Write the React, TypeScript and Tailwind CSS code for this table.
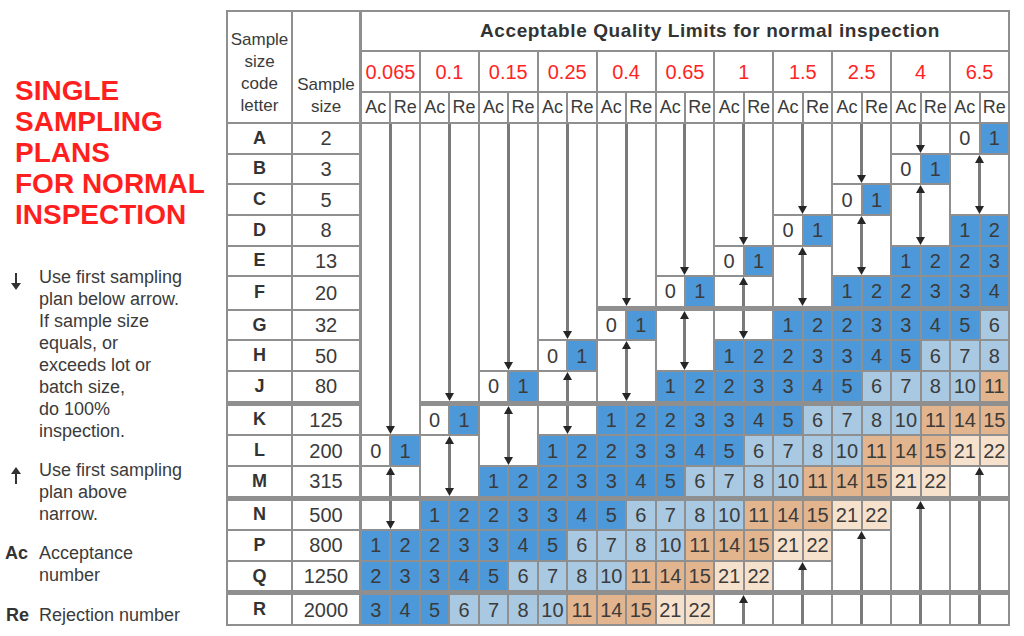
import type { ReactNode } from "react"

type Kind = "down" | "up" | "both" | "line"

type ValueCell = { col: number; row: number; value: number }
type ArrowCell = { col: number; from: number; to: number; kind: Kind }

const AQLS = ["0.065", "0.1", "0.15", "0.25", "0.4", "0.65", "1", "1.5", "2.5", "4", "6.5"]

const LOTS: [string, number][] = [
  ["A", 2], ["B", 3], ["C", 5], ["D", 8], ["E", 13], ["F", 20], ["G", 32], ["H", 50],
  ["J", 80], ["K", 125], ["L", 200], ["M", 315], ["N", 500], ["P", 800], ["Q", 1250], ["R", 2000],
]

const PLANS: [number, number][] = [
  [0, 1], [1, 2], [2, 3], [3, 4], [5, 6], [7, 8], [10, 11], [14, 15], [21, 22],
]

// data rows that sit under a heavy rule (G, K, N, R)
const BREAKS = [6, 9, 12, 15]

// grid line where data row r starts: 3 header rows, plus one 1px rule row per break above it
const gridLine = (r: number) => r + 4 + BREAKS.filter((b) => r >= b).length

function shade(v: number) {
  if (v === 0) return "bg-white"
  if (v <= 5) return "bg-[#4d98d8]"
  if (v <= 10) return "bg-[#a9c8e2]"
  if (v <= 15) return "bg-[#e3b58e]"
  return "bg-[#f6e1cd]"
}

function buildCells() {
  const values: ValueCell[] = []
  const arrows: ArrowCell[] = []

  AQLS.forEach((_, c) => {
    const col = 3 + c * 2
    const first = 10 - c
    const plan = (k: number, row: number) => {
      values.push({ col, row, value: PLANS[k][0] }, { col: col + 1, row, value: PLANS[k][1] })
    }

    if (first > 0) arrows.push({ col, from: 0, to: first - 1, kind: "down" })
    plan(0, first)

    if (BREAKS.includes(first + 2)) {
      arrows.push({ col, from: first + 1, to: first + 1, kind: "up" })
      arrows.push({ col, from: first + 2, to: first + 2, kind: "down" })
    } else {
      arrows.push({ col, from: first + 1, to: first + 2, kind: "both" })
    }

    for (let k = 1; k < PLANS.length; k++) {
      const row = first + 2 + k
      if (row <= 15) plan(k, row)
    }

    let start = first + 11
    let head = true
    while (start <= 15) {
      let end = start
      while (end < 15 && !BREAKS.includes(end + 1)) end++
      arrows.push({ col, from: start, to: end, kind: head ? "up" : "line" })
      head = false
      start = end + 1
    }
  })

  return { values, arrows }
}

function Head({ up }: { up?: boolean }) {
  return (
    <svg width="9" height="8" viewBox="0 0 9 8" className="block shrink-0 fill-[#262626]">
      <path d={up ? "M0 8H9L4.5 0Z" : "M0 0H9L4.5 8Z"} />
    </svg>
  )
}

function Arrow({ kind }: { kind: Kind }) {
  return (
    <div className="flex h-full flex-col items-center bg-white">
      {(kind === "up" || kind === "both") && <Head up />}
      <div className="w-[3px] flex-1 bg-[#7a7a7a]" />
      {(kind === "down" || kind === "both") && <Head />}
    </div>
  )
}

function SamplingTable() {
  const { values, arrows } = buildCells()

  return (
    <div className="grid h-[616px] w-[784px] grid-cols-[63px_67px_repeat(22,minmax(0,1fr))] grid-rows-[38px_39px_29px_repeat(6,minmax(0,1fr))_1px_repeat(3,minmax(0,1fr))_1px_repeat(3,minmax(0,1fr))_1px_repeat(3,minmax(0,1fr))_1px_minmax(0,1fr)] gap-[2px] bg-[#8f8f8f] p-[2px]">
      <div className="col-start-1 row-span-3 row-start-1 flex flex-col justify-end bg-white pb-[5px] text-center text-[17px] leading-[22px]">
        <span>Sample</span>
        <span>size</span>
        <span>code</span>
        <span>letter</span>
      </div>
      <div className="col-start-2 row-span-3 row-start-1 flex flex-col justify-end border-r border-[#8f8f8f] bg-white pb-[4px] text-center text-[17px] leading-[22px]">
        <span>Sample</span>
        <span>size</span>
      </div>
      <div className="col-span-22 col-start-3 row-start-1 flex items-center justify-center bg-white pl-[50px] text-[19px] font-bold tracking-[0.6px] text-[#333]">
        Acceptable Quality Limits for normal inspection
      </div>

      {AQLS.map((aql, c) => (
        <div
          key={aql}
          className="flex items-center justify-center bg-white text-[20px] text-[#ff2424]"
          style={{ gridColumn: `${3 + c * 2} / span 2`, gridRow: 2 }}
        >
          {aql}
        </div>
      ))}

      {AQLS.flatMap((aql, c) =>
        ["Ac", "Re"].map((label, i) => (
          <div
            key={aql + label}
            className="flex items-center justify-center bg-white text-[18px]"
            style={{ gridColumn: 3 + c * 2 + i, gridRow: 3 }}
          >
            {label}
          </div>
        )),
      )}

      {LOTS.map(([letter, size], r) => (
        <div key={letter} className="contents">
          <div
            className="flex items-center justify-center bg-white text-[18px] font-bold text-[#333]"
            style={{ gridColumn: 1, gridRow: `${gridLine(r)} / span ${r === 5 ? 2 : 1}` }}
          >
            {letter}
          </div>
          <div
            className="flex items-center justify-center border-r border-[#8f8f8f] bg-white text-[20px]"
            style={{ gridColumn: 2, gridRow: `${gridLine(r)} / span ${r === 5 ? 2 : 1}` }}
          >
            {size}
          </div>
        </div>
      ))}

      {values.map((cell) => (
        <div
          key={`v${cell.col}-${cell.row}`}
          className={`flex items-center justify-center text-[20px] ${shade(cell.value)}`}
          style={{ gridColumn: cell.col, gridRow: gridLine(cell.row) }}
        >
          {cell.value}
        </div>
      ))}

      {arrows.map((cell) => (
        <div
          key={`a${cell.col}-${cell.from}`}
          style={{ gridColumn: `${cell.col} / span 2`, gridRow: `${gridLine(cell.from)} / ${gridLine(cell.to) + 1}` }}
        >
          <Arrow kind={cell.kind} />
        </div>
      ))}
    </div>
  )
}

function DownMark() {
  return (
    <svg width="10" height="17" viewBox="0 0 10 17" className="ml-[11px] mt-[7px] fill-[#333]">
      <path d="M4 0h2v10h4l-5 7-5-7h4z" />
    </svg>
  )
}

function UpMark() {
  return (
    <svg width="10" height="17" viewBox="0 0 10 17" className="ml-[11px] mt-[8px] fill-[#333]">
      <path d="M5 0l5 7H6v10H4V7H0z" />
    </svg>
  )
}

function Note({ mark, children, className }: { mark: ReactNode; children: ReactNode; className: string }) {
  return (
    <div className={`flex ${className}`}>
      <div className="w-[39px] shrink-0">{mark}</div>
      <p>{children}</p>
    </div>
  )
}

export default function App() {
  return (
    <div className="flex h-[636px] w-[1024px] overflow-hidden bg-white text-[#3b3b3b] [font-family:'Liberation_Sans',Arial,sans-serif]">
      <aside className="w-[226px] shrink-0 pt-[75px]">
        <h1 className="pl-[15px] text-[28px] font-bold leading-[31px] text-[#ff1f1f]">
          SINGLE
          <br />
          SAMPLING
          <br />
          PLANS
          <br />
          FOR NORMAL
          <br />
          INSPECTION
        </h1>
        <div className="text-[18px] leading-[22px]">
          <Note mark={<DownMark />} className="mt-[36px]">
            Use first sampling
            <br />
            plan below arrow.
            <br />
            If sample size
            <br />
            equals, or
            <br />
            exceeds lot or
            <br />
            batch size,
            <br />
            do 100%
            <br />
            inspection.
          </Note>
          <Note mark={<UpMark />} className="mt-[17px]">
            Use first sampling
            <br />
            plan above
            <br />
            narrow.
          </Note>
          <Note mark={<span className="pl-[5px] font-bold text-[#333]">Ac</span>} className="mt-[17px]">
            Acceptance
            <br />
            number
          </Note>
          <Note mark={<span className="pl-[6px] font-bold text-[#333]">Re</span>} className="mt-[18px]">
            Rejection number
          </Note>
        </div>
      </aside>
      <div className="pt-[10px]">
        <SamplingTable />
      </div>
    </div>
  )
}
